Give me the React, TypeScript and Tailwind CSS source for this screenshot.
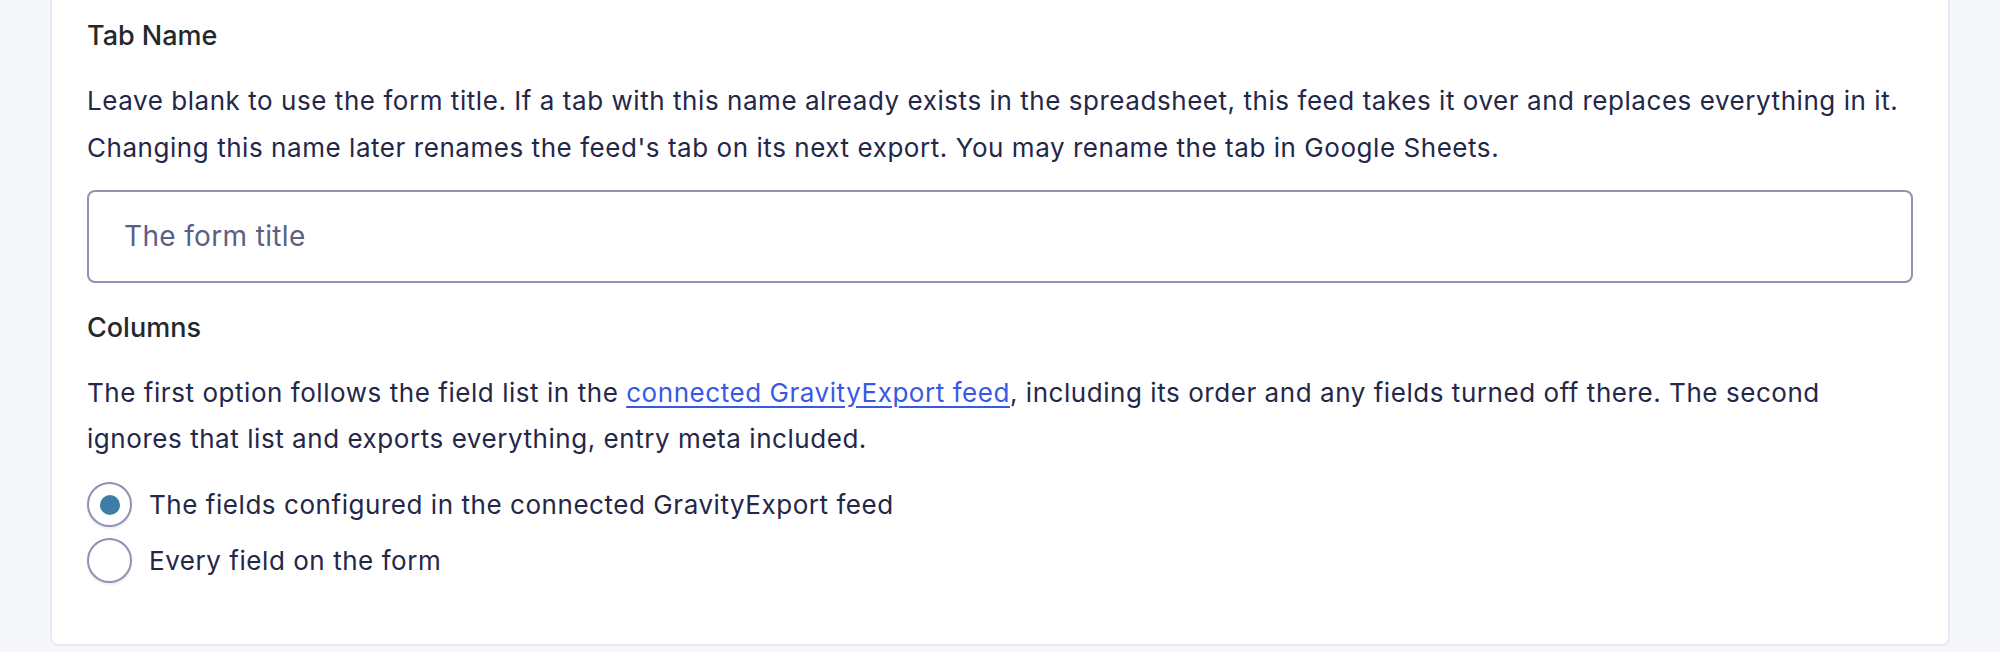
import { useState } from "react";

type Option = {
  value: string;
  label: string;
};

const COLUMN_OPTIONS: Option[] = [
  { value: "feed", label: "The fields configured in the connected GravityExport feed" },
  { value: "all", label: "Every field on the form" },
];

function RadioRow({
  option,
  checked,
  onSelect,
}: {
  option: Option;
  checked: boolean;
  onSelect: () => void;
}) {
  return (
    <label className="flex items-center gap-[17px] cursor-pointer w-fit">
      <button
        type="button"
        onClick={onSelect}
        className="size-[45px] shrink-0 rounded-full border-2 border-[#9092b2] bg-white flex items-center justify-center shadow-[0_2px_2px_rgba(18,25,97,0.08)]"
      >
        {checked && <span className="size-[20px] rounded-full bg-[#3e7da6]" />}
      </button>
      <span className="text-[26px] leading-[45px] tracking-[0.55px] text-[#242748]">{option.label}</span>
    </label>
  );
}

export default function App() {
  const [tabName, setTabName] = useState("");
  const [columns, setColumns] = useState("feed");

  return (
    <div
      className="min-h-[652px] bg-[#f5f7fb] px-[50px]"
      style={{ fontFamily: "Inter, 'Noto Sans', sans-serif" }}
    >
      <div className="bg-white rounded-b-[8px] border-x-2 border-b-2 border-[#e8eaf3] px-[35px] pt-[18px] pb-[61px]">
        <div className="text-[27px] leading-[36px] font-medium text-[#23282d]">Tab Name</div>
        <p className="mt-[24px] text-[26px] leading-[46.8px] tracking-[0.55px] text-[#242748]">
          <span className="block whitespace-nowrap">
            Leave blank to use the form title. If a tab with this name already exists in the spreadsheet, this feed
            takes it over and replaces everything in it.
          </span>
          <span className="block whitespace-nowrap">
            Changing this name later renames the feed's tab on its next export. You may rename the tab in Google
            Sheets.
          </span>
        </p>
        <input
          value={tabName}
          onChange={(e) => setTabName(e.target.value)}
          placeholder="The form title"
          className="mt-[18px] block w-full h-[93px] rounded-[8px] border-2 border-[#9092b2] px-[35px] text-[28px] tracking-[0.35px] text-[#242748] placeholder:text-[#5b5f86] outline-none"
        />

        <div className="mt-[27px] text-[27px] leading-[36px] font-medium text-[#23282d]">Columns</div>
        <p className="mt-[24px] text-[26px] leading-[46.8px] tracking-[0.55px] text-[#242748]">
          <span className="block whitespace-nowrap">
            The first option follows the field list in the{" "}
            <a href="#" className="text-[#3858e9] underline underline-offset-[4px]">
              connected GravityExport feed
            </a>
            , including its order and any fields turned off there. The second
          </span>
          <span className="block whitespace-nowrap">ignores that list and exports everything, entry meta included.</span>
        </p>

        <div className="mt-[19px] flex flex-col gap-[11px]">
          {COLUMN_OPTIONS.map((opt) => (
            <RadioRow
              key={opt.value}
              option={opt}
              checked={columns === opt.value}
              onSelect={() => setColumns(opt.value)}
            />
          ))}
        </div>
      </div>
    </div>
  );
}
